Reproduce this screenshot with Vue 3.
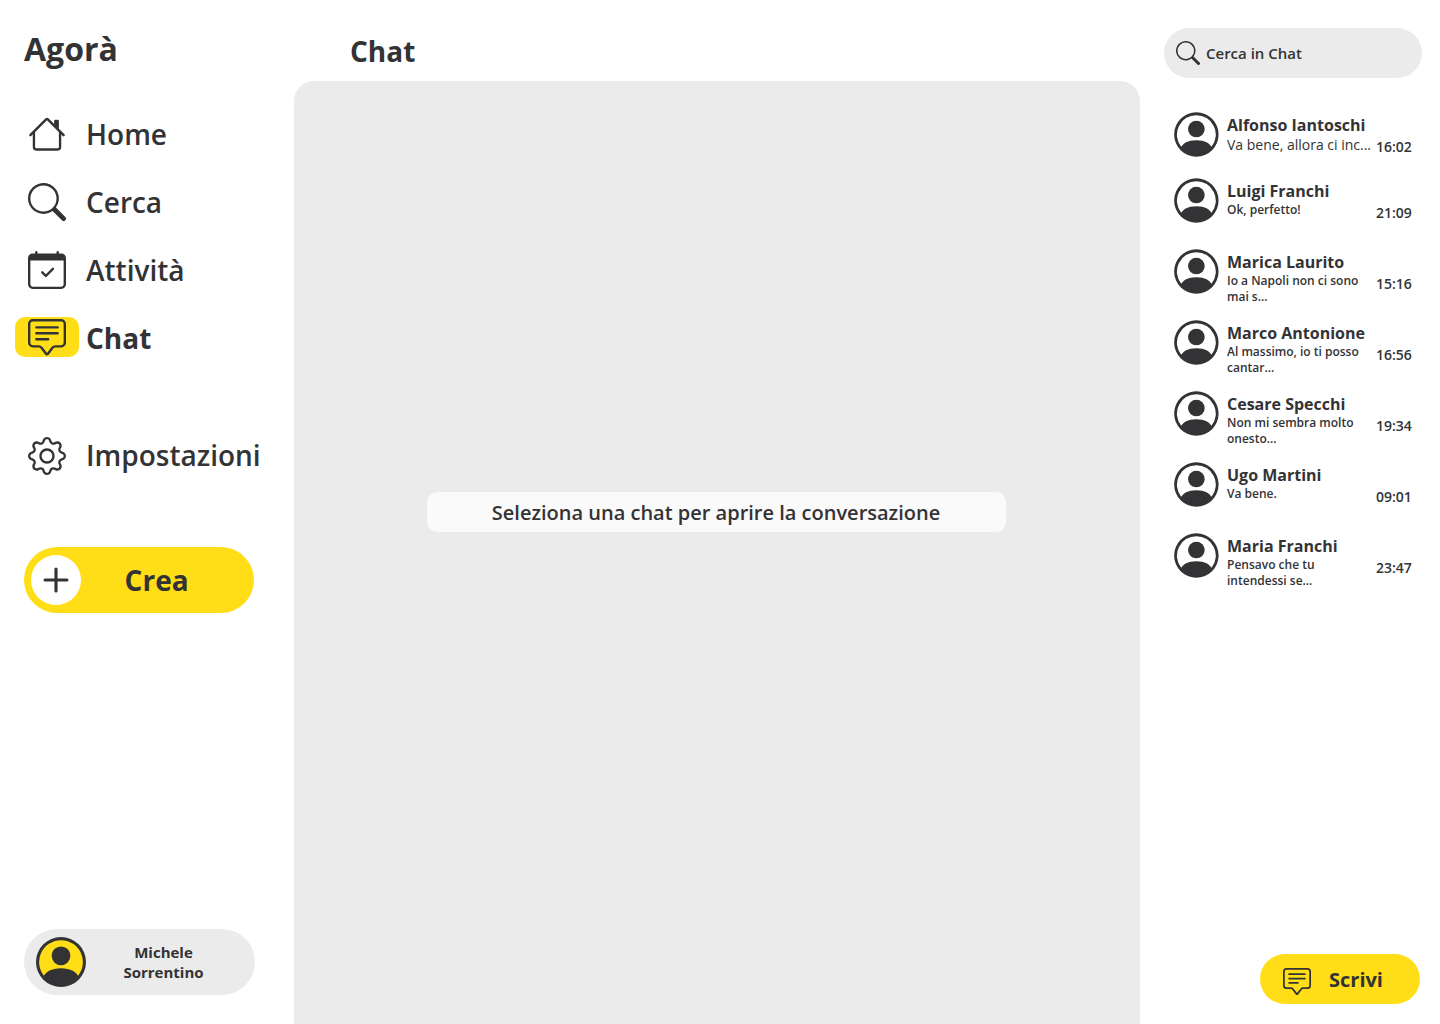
<script setup>
const icons = {
  home: [
    'M2 13.5V7h1v6.5a.5.5 0 0 0 .5.5h9a.5.5 0 0 0 .5-.5V7h1v6.5a1.5 1.5 0 0 1-1.5 1.5h-9A1.5 1.5 0 0 1 2 13.5zm11-11V6l-2-2V2.5a.5.5 0 0 1 .5-.5h1a.5.5 0 0 1 .5.5z',
    'M7.293 1.5a1 1 0 0 1 1.414 0l6.647 6.646a.5.5 0 0 1-.708.708L8 2.207 1.354 8.854a.5.5 0 1 1-.708-.708L7.293 1.5z',
  ],
  search: [
    'M11.742 10.344a6.5 6.5 0 1 0-1.397 1.398h-.001c.03.04.062.078.098.115l3.85 3.85a1 1 0 0 0 1.415-1.414l-3.85-3.85a1.007 1.007 0 0 0-.115-.1zM12 6.5a5.5 5.5 0 1 1-11 0 5.5 5.5 0 0 1 11 0z',
  ],
  calendar: [
    'M10.854 7.146a.5.5 0 0 1 0 .708l-3 3a.5.5 0 0 1-.708 0l-1.5-1.5a.5.5 0 1 1 .708-.708L7.5 9.793l2.646-2.647a.5.5 0 0 1 .708 0z',
    'M3.5 0a.5.5 0 0 1 .5.5V1h8V.5a.5.5 0 0 1 1 0V1h1a2 2 0 0 1 2 2v11a2 2 0 0 1-2 2H2a2 2 0 0 1-2-2V3a2 2 0 0 1 2-2h1V.5a.5.5 0 0 1 .5-.5zM1 4v10a1 1 0 0 0 1 1h12a1 1 0 0 0 1-1V4H1z',
  ],
  chat: [
    'M14 1a1 1 0 0 1 1 1v8a1 1 0 0 1-1 1h-2.5a2 2 0 0 0-1.6.8L8 14.333 6.1 11.8a2 2 0 0 0-1.6-.8H2a1 1 0 0 1-1-1V2a1 1 0 0 1 1-1h12zM2 0a2 2 0 0 0-2 2v8a2 2 0 0 0 2 2h2.5a1 1 0 0 1 .8.4l1.9 2.533a1 1 0 0 0 1.6 0l1.9-2.533a1 1 0 0 1 .8-.4H14a2 2 0 0 0 2-2V2a2 2 0 0 0-2-2H2z',
    'M3 3.5a.5.5 0 0 1 .5-.5h9a.5.5 0 0 1 0 1h-9a.5.5 0 0 1-.5-.5zM3 6a.5.5 0 0 1 .5-.5h9a.5.5 0 0 1 0 1h-9A.5.5 0 0 1 3 6zm0 2.5a.5.5 0 0 1 .5-.5h5a.5.5 0 0 1 0 1h-5a.5.5 0 0 1-.5-.5z',
  ],
  gear: [
    'M8 4.754a3.246 3.246 0 1 0 0 6.492 3.246 3.246 0 0 0 0-6.492zM5.754 8a2.246 2.246 0 1 1 4.492 0 2.246 2.246 0 0 1-4.492 0z',
    'M9.796 1.343c-.527-1.79-3.065-1.79-3.592 0l-.094.319a.873.873 0 0 1-1.255.52l-.292-.16c-1.64-.892-3.433.902-2.54 2.541l.159.292a.873.873 0 0 1-.52 1.255l-.319.094c-1.79.527-1.79 3.065 0 3.592l.319.094a.873.873 0 0 1 .52 1.255l-.16.292c-.892 1.64.901 3.434 2.541 2.54l.292-.159a.873.873 0 0 1 1.255.52l.094.319c.527 1.79 3.065 1.79 3.592 0l.094-.319a.873.873 0 0 1 1.255-.52l.292.16c1.64.893 3.434-.902 2.54-2.541l-.159-.292a.873.873 0 0 1 .52-1.255l.319-.094c1.79-.527 1.79-3.065 0-3.592l-.319-.094a.873.873 0 0 1-.52-1.255l.16-.292c.893-1.64-.902-3.433-2.541-2.54l-.292.159a.873.873 0 0 1-1.255-.52l-.094-.319zm-2.633.283c.246-.835 1.428-.835 1.674 0l.094.319a1.873 1.873 0 0 0 2.693 1.115l.291-.16c.764-.415 1.6.42 1.184 1.185l-.159.292a1.873 1.873 0 0 0 1.116 2.692l.318.094c.835.246.835 1.428 0 1.674l-.319.094a1.873 1.873 0 0 0-1.115 2.693l.16.291c.415.764-.42 1.6-1.185 1.184l-.291-.159a1.873 1.873 0 0 0-2.693 1.116l-.094.318c-.246.835-1.428.835-1.674 0l-.094-.319a1.873 1.873 0 0 0-2.692-1.115l-.292.16c-.764.415-1.6-.42-1.184-1.185l.159-.291A1.873 1.873 0 0 0 1.945 8.93l-.319-.094c-.835-.246-.835-1.428 0-1.674l.319-.094A1.873 1.873 0 0 0 3.06 4.377l-.16-.292c-.415-.764.42-1.6 1.185-1.184l.292.159a1.873 1.873 0 0 0 2.692-1.115l.094-.319z',
  ],
  plus: [
    'M8 4a.5.5 0 0 1 .5.5v3h3a.5.5 0 0 1 0 1h-3v3a.5.5 0 0 1-1 0v-3h-3a.5.5 0 0 1 0-1h3v-3A.5.5 0 0 1 8 4z',
  ],
  person: [
    'M11 6a3 3 0 1 1-6 0 3 3 0 0 1 6 0z',
    'M0 8a8 8 0 1 1 16 0A8 8 0 0 1 0 8zm8-7a7 7 0 0 0-5.468 11.37C3.242 11.226 4.805 10 8 10s4.757 1.225 5.468 2.37A7 7 0 0 0 8 1z',
  ],
}

const nav = [
  { icon: 'home', label: 'Home' },
  { icon: 'search', label: 'Cerca' },
  { icon: 'calendar', label: 'Attività' },
  { icon: 'chat', label: 'Chat', active: true },
  { icon: 'gear', label: 'Impostazioni', apart: true },
]

const chats = [
  { name: 'Alfonso Iantoschi', text: 'Va bene, allora ci inc...', time: '16:02', unread: true },
  { name: 'Luigi Franchi', text: 'Ok, perfetto!', time: '21:09' },
  { name: 'Marica Laurito', text: 'Io a Napoli non ci sono mai s...', time: '15:16' },
  { name: 'Marco Antonione', text: 'Al massimo, io ti posso cantar...', time: '16:56' },
  { name: 'Cesare Specchi', text: 'Non mi sembra molto onesto...', time: '19:34' },
  { name: 'Ugo Martini', text: 'Va bene.', time: '09:01' },
  { name: 'Maria Franchi', text: 'Pensavo che tu intendessi se...', time: '23:47' },
]
</script>

<template>
  <div class="app">
    <aside class="sidebar">
      <h1 class="brand">Agorà</h1>
      <nav class="nav">
        <a v-for="n in nav" :key="n.label" class="nav-item" :class="{ active: n.active, apart: n.apart }">
          <span class="nav-icon">
            <svg viewBox="0 0 16 16"><path v-for="d in icons[n.icon]" :key="d" :d="d" /></svg>
          </span>
          <span class="nav-label">{{ n.label }}</span>
        </a>
      </nav>
      <button class="create">
        <span class="plus"><svg viewBox="0 0 16 16"><path :d="icons.plus[0]" /></svg></span>
        <span class="create-label">Crea</span>
      </button>
      <div class="profile">
        <span class="me"><svg viewBox="0 0 16 16"><path v-for="d in icons.person" :key="d" :d="d" /></svg></span>
        <span class="me-name">Michele<br />Sorrentino</span>
      </div>
    </aside>

    <main class="main">
      <h2 class="title">Chat</h2>
      <section class="board">
        <p class="hint">Seleziona una chat per aprire la conversazione</p>
      </section>
    </main>

    <aside class="panel">
      <label class="search">
        <svg viewBox="0 0 16 16"><path :d="icons.search[0]" /></svg>
        <span>Cerca in Chat</span>
      </label>
      <ul class="chats">
        <li v-for="c in chats" :key="c.name" class="chat" :class="{ unread: c.unread }">
          <svg class="avatar" viewBox="-0.05 -0.13 16.2 16.2"><path v-for="d in icons.person" :key="d" :d="d" /></svg>
          <div class="body">
            <div class="name">{{ c.name }}</div>
            <div class="text">{{ c.text }}</div>
          </div>
          <time class="time">{{ c.time }}</time>
        </li>
      </ul>
      <button class="write">
        <svg viewBox="0 0 16 16"><path v-for="d in icons.chat" :key="d" :d="d" /></svg>
        <span>Scrivi</span>
      </button>
    </aside>
  </div>
</template>

<style>
body {
  margin: 0;
  background: #fff;
}
</style>

<style scoped>
.app {
  display: flex;
  width: 1440px;
  height: 1024px;
  overflow: hidden;
  font-family: "Open Sans", "Noto Sans", sans-serif;
  font-weight: 600;
  color: #333335;
}
svg {
  display: block;
  flex: none;
  fill: #333335;
}
h1, h2, p, ul {
  margin: 0;
  padding: 0;
}
button {
  border: 0;
  padding: 0;
  font: inherit;
  color: inherit;
}
.sidebar {
  display: flex;
  flex-direction: column;
  box-sizing: border-box;
  width: 294px;
  padding: 27px 0 29px 24px;
  white-space: nowrap;
}
.brand {
  height: 44px;
  line-height: 44px;
  font-size: 32px;
  font-weight: 700;
}
.nav {
  margin: 42px 0 0 -9px;
}
.nav-item {
  display: flex;
  align-items: center;
  height: 40px;
  margin-bottom: 28px;
}
.nav-item.apart {
  margin-top: 77px;
}
.nav-icon {
  display: flex;
  align-items: center;
  justify-content: center;
  box-sizing: border-box;
  width: 64px;
  height: 40px;
  margin-right: 7px;
  padding-top: 2px;
  border-radius: 10px;
}
.apart .nav-icon {
  padding-top: 4px;
}
.nav-icon svg {
  width: 38px;
  height: 38px;
}
.nav-label {
  line-height: 38px;
  font-size: 28px;
  padding-top: 2px;
}
.active .nav-icon {
  background: #ffde17;
}
.active .nav-label {
  font-weight: 700;
}
.create {
  display: flex;
  align-items: center;
  box-sizing: border-box;
  width: 230px;
  height: 66px;
  margin-top: 45px;
  padding-left: 7px;
  border-radius: 33px;
  background: #ffde17;
}
.plus {
  width: 50px;
  height: 50px;
  border-radius: 50%;
  background: #fff;
}
.create-label {
  margin-left: 43.6px;
  font-size: 28px;
  font-weight: 700;
  line-height: 38px;
}
.profile {
  display: flex;
  align-items: center;
  box-sizing: border-box;
  width: 231px;
  height: 66px;
  margin-top: auto;
  padding-left: 12px;
  border-radius: 33px;
  background: #ebebeb;
}
.me {
  width: 50px;
  height: 50px;
  border-radius: 50%;
  background: radial-gradient(circle, #ffde17 23px, transparent 24px);
}
.me-name {
  width: 155px;
  text-align: center;
  font-size: 15px;
  font-weight: 700;
  line-height: 20px;
}
.main {
  display: flex;
  flex-direction: column;
  width: 846px;
}
.title {
  height: 38px;
  padding: 32px 0 11px 56px;
  line-height: 38px;
  font-size: 28px;
  font-weight: 700;
}
.board {
  flex: 1;
  border-radius: 20px 20px 0 0;
  background: #ebebeb;
}
.hint {
  box-sizing: border-box;
  width: 579px;
  height: 40px;
  margin: 411px 0 0 133px;
  padding-right: 1px;
  line-height: 41px;
  border-radius: 10px;
  background: #fafafa;
  text-align: center;
  font-size: 20px;
}
.panel {
  display: flex;
  flex-direction: column;
  box-sizing: border-box;
  width: 300px;
  padding: 28px 18px 20px 24px;
}
.search {
  display: flex;
  align-items: center;
  gap: 6px;
  box-sizing: border-box;
  height: 50px;
  padding-left: 12px;
  border-radius: 25px;
  background: #ebebeb;
  font-size: 15px;
}
.search svg {
  width: 24px;
  height: 24px;
}
.chats {
  margin: 34px 0 0 10px;
  list-style: none;
}
.chat {
  display: flex;
  height: 71px;
}
.chat.unread {
  height: 66px;
}
.avatar {
  width: 45px;
  height: 45px;
}
.body {
  width: 149px;
  margin-left: 8px;
}
.name {
  margin-top: 3px;
  line-height: 20px;
  font-size: 16px;
  font-weight: 700;
  white-space: nowrap;
}
.text {
  width: 138px;
  margin-top: 1px;
  line-height: 16px;
  font-size: 12px;
}
.unread .text {
  width: 149px;
  margin-top: 0;
  line-height: 20px;
  font-size: 14px;
  font-weight: 400;
  white-space: nowrap;
}
.time {
  padding-top: 25px;
  line-height: 20px;
  font-size: 14px;
}
.write {
  display: flex;
  align-items: center;
  align-self: flex-end;
  box-sizing: border-box;
  width: 160px;
  height: 50px;
  margin: auto 2px 0 0;
  padding-left: 23px;
  border-radius: 25px;
  background: #ffde17;
  font-size: 20px;
  font-weight: 700;
}
.write svg {
  width: 28px;
  height: 28px;
  margin: 6px 18px 0 0;
}
</style>
